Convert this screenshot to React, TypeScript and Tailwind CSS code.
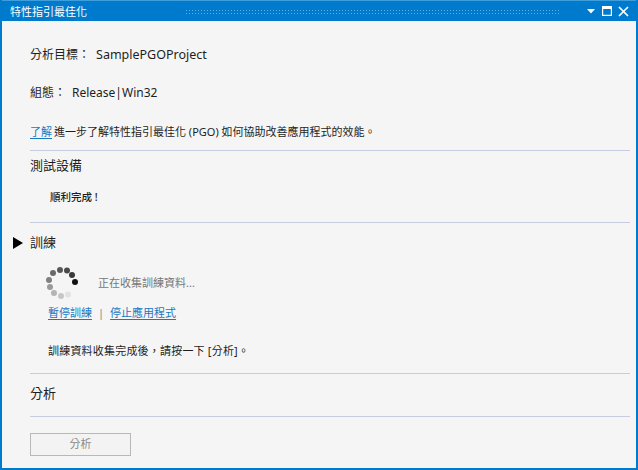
const font = "font-['Noto_Sans','Noto_Sans_CJK_TC',sans-serif]";

function Spinner() {
  const dots: [number, number, string][] = [
    [30, 16, "#111111"], [27, 9, "#3a3a3a"], [22, 4.5, "#4a4a4a"], [15, 4, "#585858"],
    [8, 7, "#6a6a6a"], [4, 14, "#808080"], [5, 21, "#999999"], [9, 27, "#b4b4b4"],
    [16, 30, "#c6c6c6"], [23, 28.5, "#e2e2e2"],
  ];
  return (
    <svg width="34" height="34" viewBox="0 0 34 34" className="block">
      {dots.map(([x, y, c], i) => (
        <circle key={i} cx={x} cy={y} r="3" fill={c} />
      ))}
    </svg>
  );
}

function Rule() {
  return <div className="h-px bg-[#c9cbe0]" />;
}

export default function App() {
  return (
    <div className={`${font} w-[638px] h-[470px] flex flex-col bg-[#f5f5f5] border-2 border-t-0 border-[#007acc] text-[#1e1e1e] overflow-hidden`}>
      <div className="h-[21px] shrink-0 bg-[#007acc] border-t border-[#3f9fdc] flex items-center pl-[8px] text-white text-[11px]">
        <span className="leading-none">特性指引最佳化</span>
        <div className="ml-[98px] w-[376px] h-[5px] bg-[radial-gradient(#5cb2e6_1px,transparent_1px)] bg-[length:3px_3px]" />
        <div className="ml-auto flex items-center">
          <svg width="8" height="5" viewBox="0 0 8 5" className="mr-[7px]"><path d="M0 0h8L4 4.5z" fill="#fff" /></svg>
          <svg width="10" height="10" viewBox="0 0 10 10" className="mr-[6px]"><path d="M.6.6h8.8v8.8H.6z" fill="none" stroke="#fff" strokeWidth="1.2" /><rect x="0" y="0" width="10" height="3" fill="#fff" /></svg>
          <svg width="11" height="11" viewBox="0 0 11 11" className="mr-[7px]"><path d="M1 1l9 9M10 1l-9 9" stroke="#fff" strokeWidth="1.7" /></svg>
        </div>
      </div>

      <div className="relative flex-1 flex flex-col pl-[28px] pr-[6px]">
        <div className="flex items-center h-[20px] mt-[24px] text-[12.5px]">
          <span className="text-[12px]">分析目標：</span>
          <span className="ml-[6px]">SamplePGOProject</span>
        </div>
        <div className="flex items-center h-[20px] mt-[18px] text-[12px]">
          <span>組態：</span>
          <span className="ml-[6px]">Release|Win32</span>
        </div>
        <div className="flex items-center h-[18px] mt-[20px] text-[11px] whitespace-nowrap">
          <span className="text-[#1a78c2] underline underline-offset-2">了解</span>
          <span className="ml-[2px]">進一步了解特性指引最佳化 (PGO) 如何協助改善應用程式的效能。</span>
        </div>
        <div className="mt-[9px]"><Rule /></div>

        <div className="mt-[6px] h-[18px] flex items-center text-[13px]">測試設備</div>
        <div className="mt-[15px] ml-[20px] h-[16px] flex items-center text-[10.5px] font-medium">順利完成 !</div>
        <div className="mt-[16px]"><Rule /></div>

        <div className="relative mt-[11px] h-[18px] flex items-center text-[13px]">
          <svg width="10" height="12" viewBox="0 0 10 12" className="absolute left-[-17px] top-[3px]"><path d="M0 0l10 6-10 6z" fill="#000" /></svg>
          訓練
        </div>
        <div className="mt-[14px] ml-[15px] flex items-center">
          <Spinner />
          <span className="ml-[19px] text-[11px] text-[#777777]">正在收集訓練資料...</span>
        </div>
        <div className="mt-[5px] ml-[18px] h-[16px] flex items-center text-[11px]">
          <span className="text-[#1a78c2] underline underline-offset-2">暫停訓練</span>
          <span className="mx-[6px] text-[#888888]">|</span>
          <span className="text-[#1a78c2] underline underline-offset-2">停止應用程式</span>
        </div>
        <div className="mt-[22px] ml-[18px] h-[16px] flex items-center text-[11px] tracking-[0.2px]">訓練資料收集完成後，請按一下 [分析]。</div>
        <div className="mt-[14px]"><Rule /></div>

        <div className="mt-[11px] h-[18px] flex items-center text-[13px]">分析</div>
        <div className="mt-[13px]"><Rule /></div>
        <button className="mt-[16px] w-[101px] h-[23px] border border-[#b8b8b8] bg-[#f3f3f3] text-[11px] text-[#8a8a8a] flex items-center justify-center">分析</button>
      </div>
    </div>
  );
}
